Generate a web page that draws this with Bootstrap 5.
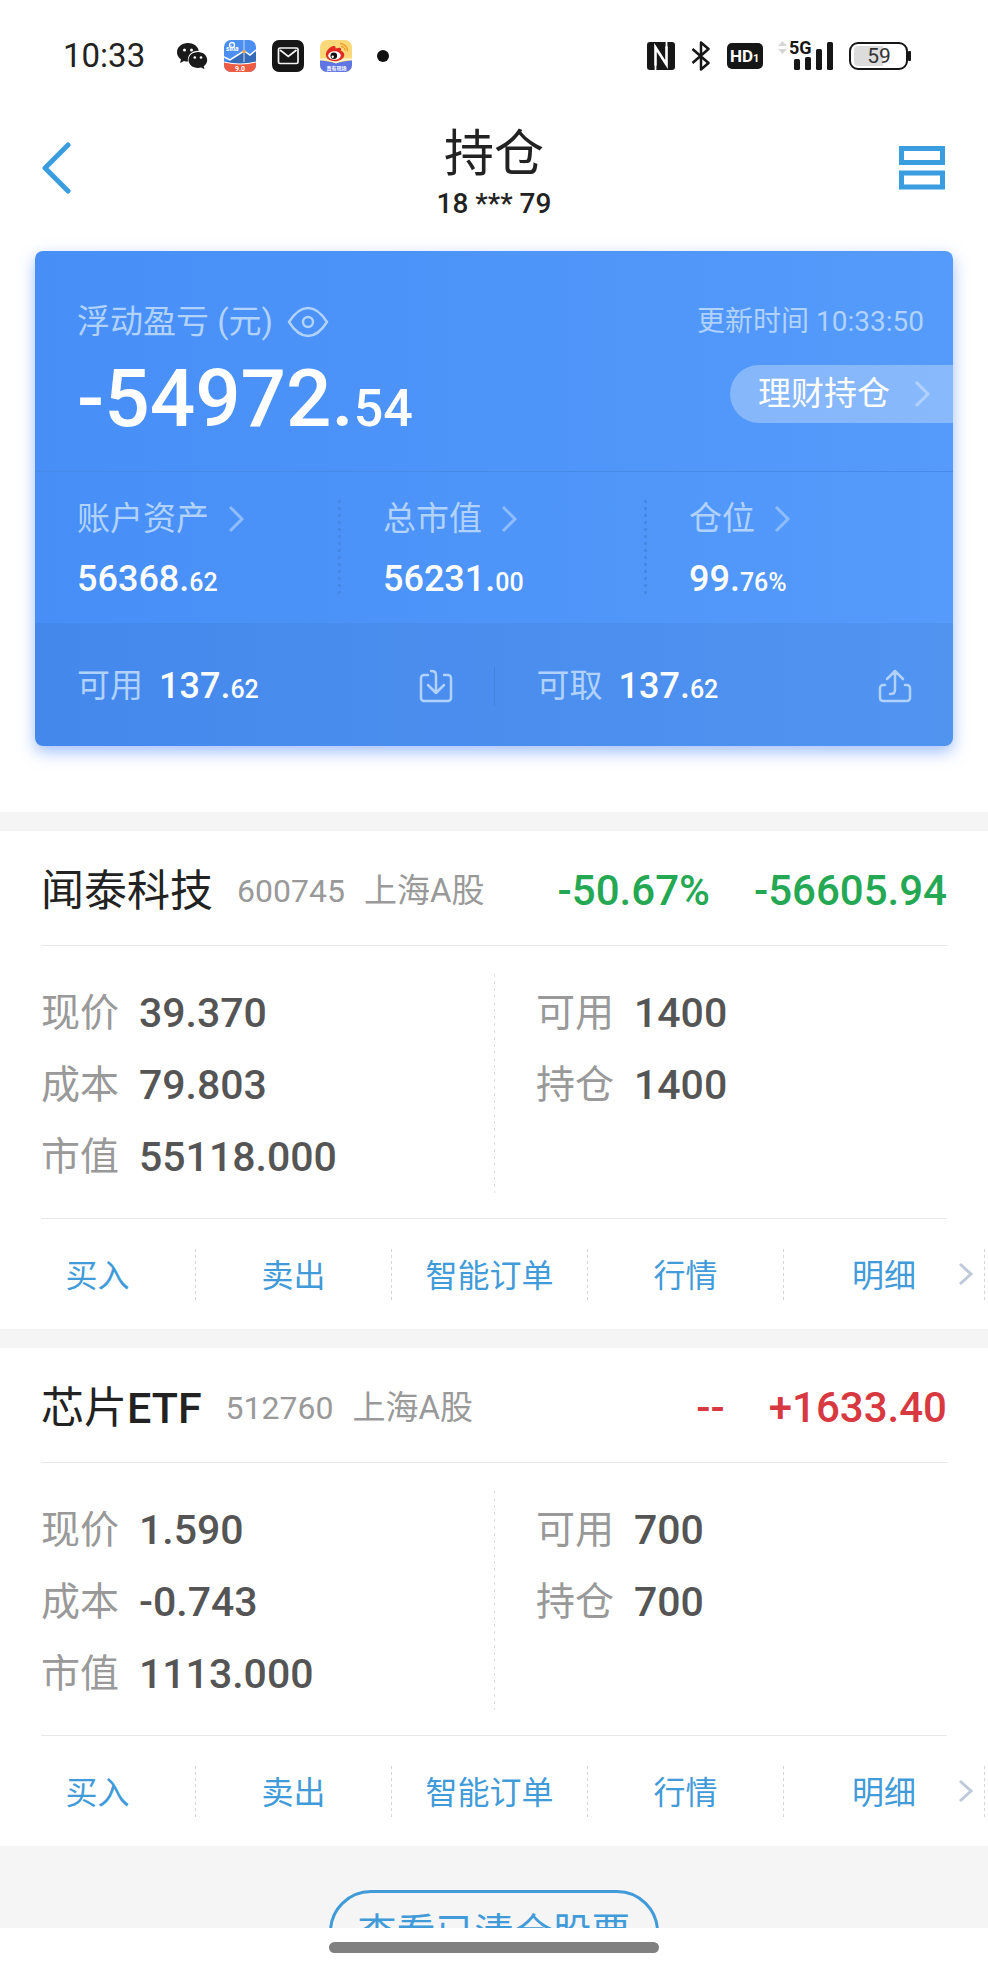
<!DOCTYPE html>
<html lang="zh-CN">
<head>
<meta charset="utf-8">
<meta name="viewport" content="width=device-width, initial-scale=1">
<title>持仓</title>
<link rel="stylesheet" href="https://cdn.jsdelivr.net/npm/bootstrap@5.3.0/dist/css/bootstrap.min.css">
<style>
  body { font-family: Roboto, "Noto Sans CJK SC", sans-serif; color: #222; background: #fff; line-height: 48px; font-size: 33px; }
  button, a { font-family: inherit; }
  svg { flex: none; display: block; }
  .fw-medium2 { font-weight: 500; }
  .app-shell { height: 100vh; min-height: 400px; }
  .status-bar { height: 112px; padding: 0 77px 0 63px; }
  .status-clock { font-size: 33px; line-height: 40px; width: 80px; }
  .status-apps { margin-left: 33px; }
  .status-system { gap: 15px; }
  .title-bar { height: 112px; padding: 0 41px; }
  .title-side { width: 48px; }
  .plain-btn { border: 0; background: none; padding: 0; color: inherit; display: block; }
  .page-title { font-size: 50px; line-height: 64px; margin: 0; font-weight: 400; }
  .account-no { font-size: 28px; line-height: 36px; font-weight: 500; }

  .asset-card { margin: 27px 35px 66px; border-radius: 8px; color: #fff; overflow: hidden;
    background: linear-gradient(90deg, #478ef7, #559bfb); box-shadow: 0 6px 16px rgba(70,130,255,.5); }
  .soft { color: #b0d2fc; }
  .asset-top { padding: 47px 0 19px 42px; border-bottom: 1px solid #478ae8; }
  .loss-label { gap: 14px; }
  .update-time { font-size: 28px; padding-right: 29px; }
  .profit { font-size: 80px; line-height: 106px; }
  .profit-cents { font-size: 52px; line-height: 1; }
  .wealth-btn { border: 0; background: rgba(255,255,255,.3); color: #fff; height: 58px; margin-top: 19px; padding: 0 22px 0 28px; border-radius: 29px 0 0 29px; line-height: 58px; gap: 24px; }
  .stat-cell { padding: 23px 0 20px 42px; }
  .stat-cell a { gap: 20px; }
  .stat-cell .stat-num { margin-top: 12px; }
  .stat-num { font-size: 36px; }
  .cents { font-size: 25px; line-height: 1; }
  .stat-line { width: 3px; height: 94px; margin: 28px 0 0 -3px; background: repeating-linear-gradient(180deg, #4688e6 0 3px, transparent 3px 7px); }
  .asset-foot { height: 123px; padding-top: 3px; background: rgba(50,90,150,.1); }
  .foot-cell { padding: 0 41px 0 42px; gap: 16px; }
  .foot-line { width: 1px; height: 39px; background: #4383e0; }

  .band { border-top: 19px solid #f5f5f5; }
  .stock-head { margin: 0 41px; padding-top: 5px; height: 115px; border-bottom: 1px solid #e8e8e8; gap: 24px; }
  .stock-name { font-size: 43px; font-weight: 400; margin: 0; line-height: 56px; }
  .stock-code { color: #999; gap: 19px; }
  .stock-code .digits { font-size: 32px; }
  .stock-rate { font-size: 42px; gap: 44px; margin-left: auto; }
  .down { color: #24a853; }
  .up { color: #d8383f; }
  .stock-body { margin: 0 41px; padding: 28px 0 25px; border-bottom: 1px solid #e8e8e8; line-height: 72px; }
  .first-col { flex: 0 0 50%; padding-top: 3px; }
  .field { gap: 20px; height: 72px; }
  .field-label { font-size: 39px; color: #999; }
  .field-value { font-size: 41px; color: #555; }
  .body-line { width: 1px; background: repeating-linear-gradient(180deg, #dedede 0 3px, transparent 3px 7px); }
  .second-col { padding: 3px 0 0 41px; }
  .actions { height: 110px; padding-right: 3px; }
  .actions a { color: #429bd9; font-size: 32px; text-decoration: none; text-align: center; padding-top: 3px; }
  .actions .act { flex: 0 0 calc(20% - 2px); }
  .action-line { width: 1px; height: 51px; background: repeating-linear-gradient(180deg, #d4d4d4 0 3px, transparent 3px 6px); }
  .more-arrow { right: 14px; top: 43px; }
  .cleared { background: #f5f5f5; padding-top: 44px; }
  .cleared-btn { width: 330px; height: 84px; padding: 3px 0 0; border: 3px solid #429bd9; border-radius: 42px; color: #429bd9; background: transparent; font-size: 39px; line-height: 75px; }
  .home-area { height: 44px; padding-top: 14px; background: #fff; }
  .home-bar { width: 330px; height: 11px; border-radius: 6px; background: #808080; }
</style>
</head>
<body>
<div class="app-shell d-flex flex-column">
  <div class="status-bar d-flex align-items-center justify-content-between flex-shrink-0">
    <div class="d-flex align-items-center">
      <span class="status-clock">10:33</span>
      <div class="status-apps d-flex align-items-center gap-3">
        <svg width="32" height="32" viewBox="0 0 32 32"><path fill="#1a1a1a" d="M12 3C5.800 3 1 7 1 12.200c0 3 1.600 5.500 4 7.200L4 23l4-2c1.300.4 2.600.6 4 .6C11 15 16 10.500 22.800 10.800 21.800 6 17.300 3 12 3z"/><path fill="#1a1a1a" d="M22 12c-5.300 0-9.500 3.600-9.500 8s4.200 8 9.500 8c1.100 0 2.200-.2 3.200-.5l3.300 1.700-.8-2.900c2.200-1.500 3.500-3.700 3.500-6.300 0-4.400-4-8-9.200-8z"/><g fill="#fff"><circle cx="8.500" cy="10" r="1.500"/><circle cx="15.500" cy="10" r="1.500"/><circle cx="18.800" cy="17.500" r="1.300"/><circle cx="25" cy="17.500" r="1.300"/></g></svg>
        <svg width="32" height="32" viewBox="0 0 32 32"><defs><clipPath id="appA"><rect width="32" height="32" rx="7"/></clipPath></defs><g clip-path="url(#appA)"><rect width="32" height="32" fill="#4b8ff2"/><path d="M0 22l6-1 14-10 6 4 6-5v14H0z" fill="#366bb8"/><path d="M0 17l6 3 14-9 6 4 6-5" fill="none" stroke="#fff" stroke-width="1.500"/><path d="M20 0v22" stroke="#cdd9ef" stroke-width="1"/><circle cx="20" cy="11.500" r="1.700" fill="#eda54c"/><path d="M0 22q16 4 32 0v10H0z" fill="#ec5d43"/><path d="M0 22q16 4 32 0" fill="none" stroke="#fff"/><circle cx="8" cy="5" r="2.500" fill="none" stroke="#fff" stroke-width="1.300"/><text x="2" y="11" font-size="7" font-weight="700" font-style="italic" fill="#fff">sina</text><text x="16" y="30.500" text-anchor="middle" font-size="7" font-weight="700" fill="#fff">9.0</text></g></svg>
        <svg width="32" height="32" viewBox="0 0 32 32"><rect width="32" height="32" rx="7" fill="#161616"/><rect x="6.500" y="8" width="19.500" height="15.500" rx="1.500" fill="none" stroke="#f4f4f4" stroke-width="1.700"/><path d="M8 10l8.300 6.500L24.500 10" fill="none" stroke="#f4f4f4" stroke-width="1.700"/></svg>
        <svg width="32" height="32" viewBox="0 0 32 32"><defs><clipPath id="appB"><rect width="32" height="32" rx="7"/></clipPath></defs><g clip-path="url(#appB)"><rect width="32" height="32" fill="#fcd978"/><path d="M0 20l16 3 16-3v12H0z" fill="#5f75e4"/><path d="M0 19.500q9-1 16 3 7-4 16-3" fill="none" stroke="#fff3cf" stroke-width="2"/><path d="M6 15.500C5 11 11 5 14.500 6c1.500.5 1 2.500 1 2.500s5-2 5.500.2c.3 1.200-.2 2-.2 2s4 1.300 3.500 4.500c-.5 3.800-5 6-9.500 6s-8.200-2-8.800-5.700z" fill="#e02a22"/><ellipse cx="14.500" cy="15.500" rx="6.300" ry="4.300" fill="#fff"/><circle cx="13.800" cy="15.800" r="3.300" fill="#111"/><circle cx="12.700" cy="16.800" r="1.200" fill="#fff"/><path d="M20 3.500a7.500 7.500 0 0 1 7.500 8M21 6.500a4 4 0 0 1 4 4" fill="none" stroke="#eda033" stroke-width="1.500"/><text x="16.500" y="30" text-anchor="middle" font-size="5" font-weight="700" fill="#fff">真有现场</text></g></svg>
        <svg class="ms-2" width="14" height="14"><circle cx="7" cy="7" r="6" fill="#111"/></svg>
      </div>
    </div>
    <div class="status-system d-flex align-items-center">
      <svg width="28" height="28" viewBox="0 0 28 28"><rect width="28" height="28" rx="3" fill="#161616"/><path d="M8.500 23.500V5.500l11 17V4.500" fill="none" stroke="#fff" stroke-width="2.600"/><path d="M8.500 28v-5M19.500 0v6" stroke="#fff" stroke-width="1.800"/></svg>
      <svg width="22" height="30" viewBox="0 0 22 30"><path d="M2.500 8l16 14L11 28.500v-27L18.500 8l-16 14" fill="none" stroke="#161616" stroke-width="2.500" stroke-linejoin="round"/></svg>
      <svg width="36" height="26" viewBox="0 0 36 26"><rect width="36" height="26" rx="5" fill="#161616"/><text x="3" y="19" font-size="17" font-weight="700" fill="#fff">HD</text><text x="26" y="19" font-size="11" font-weight="700" fill="#fff">1</text></svg>
      <svg width="56" height="40" viewBox="0 -4 56 40"><path d="M0 6l4.500-5L9 6zM0 9l4.500 5L9 9z" fill="#d6d6d6"/><g fill="#161616"><rect x="16" y="19" width="6" height="11" rx="1.500"/><rect x="27" y="17" width="6" height="13" rx="1.500"/><rect x="38" y="9" width="6" height="21" rx="1.500"/><rect x="49" y="2" width="6" height="28" rx="1.500"/></g><text x="11" y="14" font-size="18" font-weight="700" fill="#161616">5G</text></svg>
      <svg width="62" height="30" viewBox="0 0 62 30"><rect x="1" y="2" width="57" height="26" rx="8" fill="#fff" stroke="#161616" stroke-width="2"/><path d="M9 5h25v20H9a4 4 0 0 1-4-4V9a4 4 0 0 1 4-4z" fill="#dcdcdc"/><rect x="59" y="10" width="3" height="10" rx="1" fill="#161616"/><text x="30" y="22" text-anchor="middle" font-size="21" fill="#333">59</text></svg>
    </div>
  </div>

  <header class="title-bar d-flex align-items-center justify-content-between flex-shrink-0">
    <div class="title-side"><button class="plain-btn" type="button" aria-label="返回"><svg width="32" height="52" viewBox="0 0 32 52"><path d="M27 3L4 26l23 23" fill="none" stroke="#3a9de0" stroke-width="5" stroke-linecap="round" stroke-linejoin="round"/></svg></button></div>
    <div class="text-center pt-2">
      <h1 class="page-title">持仓</h1>
      <div class="account-no">18 *** 79</div>
    </div>
    <div class="title-side"><button class="plain-btn" type="button" aria-label="切换视图"><svg width="48" height="44" viewBox="0 0 48 44"><path d="M2.500 2.500h41v14h-41zM2.500 27h41v14h-41z" fill="none" stroke="#3a9de0" stroke-width="5"/></svg></button></div>
  </header>

  <main class="flex-grow-1 overflow-hidden">
    <section class="asset-card">
      <div class="asset-top">
        <div class="d-flex align-items-center justify-content-between soft">
          <div class="loss-label d-flex align-items-center"><span>浮动盈亏 (元)</span>
            <button class="plain-btn" type="button" aria-label="隐藏金额"><svg width="42" height="32" viewBox="0 0 42 32"><path d="M2 16C9 5 15 2 21 2s12 3 19 14C33 27 27 30 21 30S9 27 2 16z" fill="none" stroke="currentColor" stroke-width="2.500" stroke-linejoin="round"/><circle cx="21" cy="16" r="5" fill="none" stroke="currentColor" stroke-width="2.500"/></svg></button>
          </div>
          <span class="update-time">更新时间 10:33:50</span>
        </div>
        <div class="d-flex justify-content-between">
          <div class="profit fw-medium2">-54972.<span class="profit-cents">54</span></div>
          <button class="wealth-btn d-flex align-items-center" type="button">理财持仓<svg class="soft" width="17" height="28" viewBox="0 0 17 28"><path d="M2 2l12 12L2 26" fill="none" stroke="currentColor" stroke-width="3"/></svg></button>
        </div>
      </div>
      <div class="row g-0">
        <div class="col-4 d-flex"><div class="stat-cell flex-grow-1"><a href="#assets" class="soft d-flex align-items-center text-decoration-none">账户资产<svg width="17" height="28" viewBox="0 0 17 28"><path d="M1 2l12 12L1 26" fill="none" stroke="#8fbdfb" stroke-width="3"/></svg></a><div class="stat-num fw-medium2">56368.<span class="cents">62</span></div></div><div class="stat-line"></div></div>
        <div class="col-4 d-flex"><div class="stat-cell flex-grow-1"><a href="#value" class="soft d-flex align-items-center text-decoration-none">总市值<svg width="17" height="28" viewBox="0 0 17 28"><path d="M1 2l12 12L1 26" fill="none" stroke="#8fbdfb" stroke-width="3"/></svg></a><div class="stat-num fw-medium2">56231.<span class="cents">00</span></div></div><div class="stat-line"></div></div>
        <div class="col-4"><div class="stat-cell"><a href="#ratio" class="soft d-flex align-items-center text-decoration-none">仓位<svg width="17" height="28" viewBox="0 0 17 28"><path d="M1 2l12 12L1 26" fill="none" stroke="#8fbdfb" stroke-width="3"/></svg></a><div class="stat-num fw-medium2">99.<span class="cents">76%</span></div></div></div>
      </div>
      <div class="asset-foot d-flex align-items-center">
        <div class="foot-cell d-flex align-items-center col"><span class="soft">可用</span><span class="stat-num fw-medium2">137.<span class="cents">62</span></span>
          <button class="plain-btn soft ms-auto" type="button" aria-label="转入"><svg width="34" height="34" viewBox="0 0 34 34"><path d="M9 6H5a3 3 0 0 0-3 3v20a3 3 0 0 0 3 3h24a3 3 0 0 0 3-3V9a3 3 0 0 0-3-3h-4M12 2c4 0 5 1 5 5v17M9 16l8 8 8-8" fill="none" stroke="currentColor" stroke-width="2.500" stroke-linecap="round" stroke-linejoin="round"/></svg></button></div>
        <div class="foot-line"></div>
        <div class="foot-cell d-flex align-items-center col"><span class="soft">可取</span><span class="stat-num fw-medium2">137.<span class="cents">62</span></span>
          <button class="plain-btn soft ms-auto" type="button" aria-label="转出"><svg width="34" height="34" viewBox="0 0 34 34"><path d="M7 16H5a3 3 0 0 0-3 3v10a3 3 0 0 0 3 3h24a3 3 0 0 0 3-3V19a3 3 0 0 0-3-3h-2M12 25c4 0 5-1 5-5V2M9 10l8-8 8 8" fill="none" stroke="currentColor" stroke-width="2.500" stroke-linecap="round" stroke-linejoin="round"/></svg></button></div>
      </div>
    </section>

    <section class="band">
      <div class="stock-head d-flex align-items-center">
        <h2 class="stock-name">闻泰科技</h2>
        <div class="stock-code d-flex align-items-baseline"><span class="digits">600745</span><span>上海A股</span></div>
        <div class="stock-rate down fw-medium2 d-flex"><span>-50.67%</span><span>-56605.94</span></div>
      </div>
      <div class="stock-body d-flex">
        <div class="first-col">
          <div class="field d-flex"><span class="field-label">现价</span><span class="field-value fw-medium2">39.370</span></div>
          <div class="field d-flex"><span class="field-label">成本</span><span class="field-value fw-medium2">79.803</span></div>
          <div class="field d-flex"><span class="field-label">市值</span><span class="field-value fw-medium2">55118.000</span></div>
        </div>
        <div class="body-line"></div>
        <div class="second-col">
          <div class="field d-flex"><span class="field-label">可用</span><span class="field-value fw-medium2">1400</span></div>
          <div class="field d-flex"><span class="field-label">持仓</span><span class="field-value fw-medium2">1400</span></div>
        </div>
      </div>
      <nav class="actions d-flex align-items-center position-relative">
        <a class="act" href="#buy">买入</a><span class="action-line"></span>
        <a class="act" href="#sell">卖出</a><span class="action-line"></span>
        <a class="act" href="#smart">智能订单</a><span class="action-line"></span>
        <a class="act" href="#quote">行情</a><span class="action-line"></span>
        <a class="flex-grow-1" href="#detail">明细</a><span class="action-line"></span>
        <svg class="more-arrow position-absolute" width="16" height="24" viewBox="0 0 16 24"><path d="M2 2l11 10L2 22" fill="none" stroke="#bfc9d8" stroke-width="3"/></svg>
      </nav>
    </section>

    <section class="band">
      <div class="stock-head d-flex align-items-center">
        <h2 class="stock-name">芯片<span class="fw-medium2">ETF</span></h2>
        <div class="stock-code d-flex align-items-baseline"><span class="digits">512760</span><span>上海A股</span></div>
        <div class="stock-rate up fw-medium2 d-flex"><span>--</span><span>+1633.40</span></div>
      </div>
      <div class="stock-body d-flex">
        <div class="first-col">
          <div class="field d-flex"><span class="field-label">现价</span><span class="field-value fw-medium2">1.590</span></div>
          <div class="field d-flex"><span class="field-label">成本</span><span class="field-value fw-medium2">-0.743</span></div>
          <div class="field d-flex"><span class="field-label">市值</span><span class="field-value fw-medium2">1113.000</span></div>
        </div>
        <div class="body-line"></div>
        <div class="second-col">
          <div class="field d-flex"><span class="field-label">可用</span><span class="field-value fw-medium2">700</span></div>
          <div class="field d-flex"><span class="field-label">持仓</span><span class="field-value fw-medium2">700</span></div>
        </div>
      </div>
      <nav class="actions d-flex align-items-center position-relative">
        <a class="act" href="#buy2">买入</a><span class="action-line"></span>
        <a class="act" href="#sell2">卖出</a><span class="action-line"></span>
        <a class="act" href="#smart2">智能订单</a><span class="action-line"></span>
        <a class="act" href="#quote2">行情</a><span class="action-line"></span>
        <a class="flex-grow-1" href="#detail2">明细</a><span class="action-line"></span>
        <svg class="more-arrow position-absolute" width="16" height="24" viewBox="0 0 16 24"><path d="M2 2l11 10L2 22" fill="none" stroke="#bfc9d8" stroke-width="3"/></svg>
      </nav>
    </section>

    <div class="cleared d-flex justify-content-center">
      <button class="cleared-btn" type="button">查看已清仓股票</button>
    </div>
  </main>

  <div class="home-area d-flex justify-content-center flex-shrink-0"><div class="home-bar"></div></div>
</div>
<script src="https://cdn.jsdelivr.net/npm/bootstrap@5.3.0/dist/js/bootstrap.bundle.min.js"></script>
</body>
</html>
